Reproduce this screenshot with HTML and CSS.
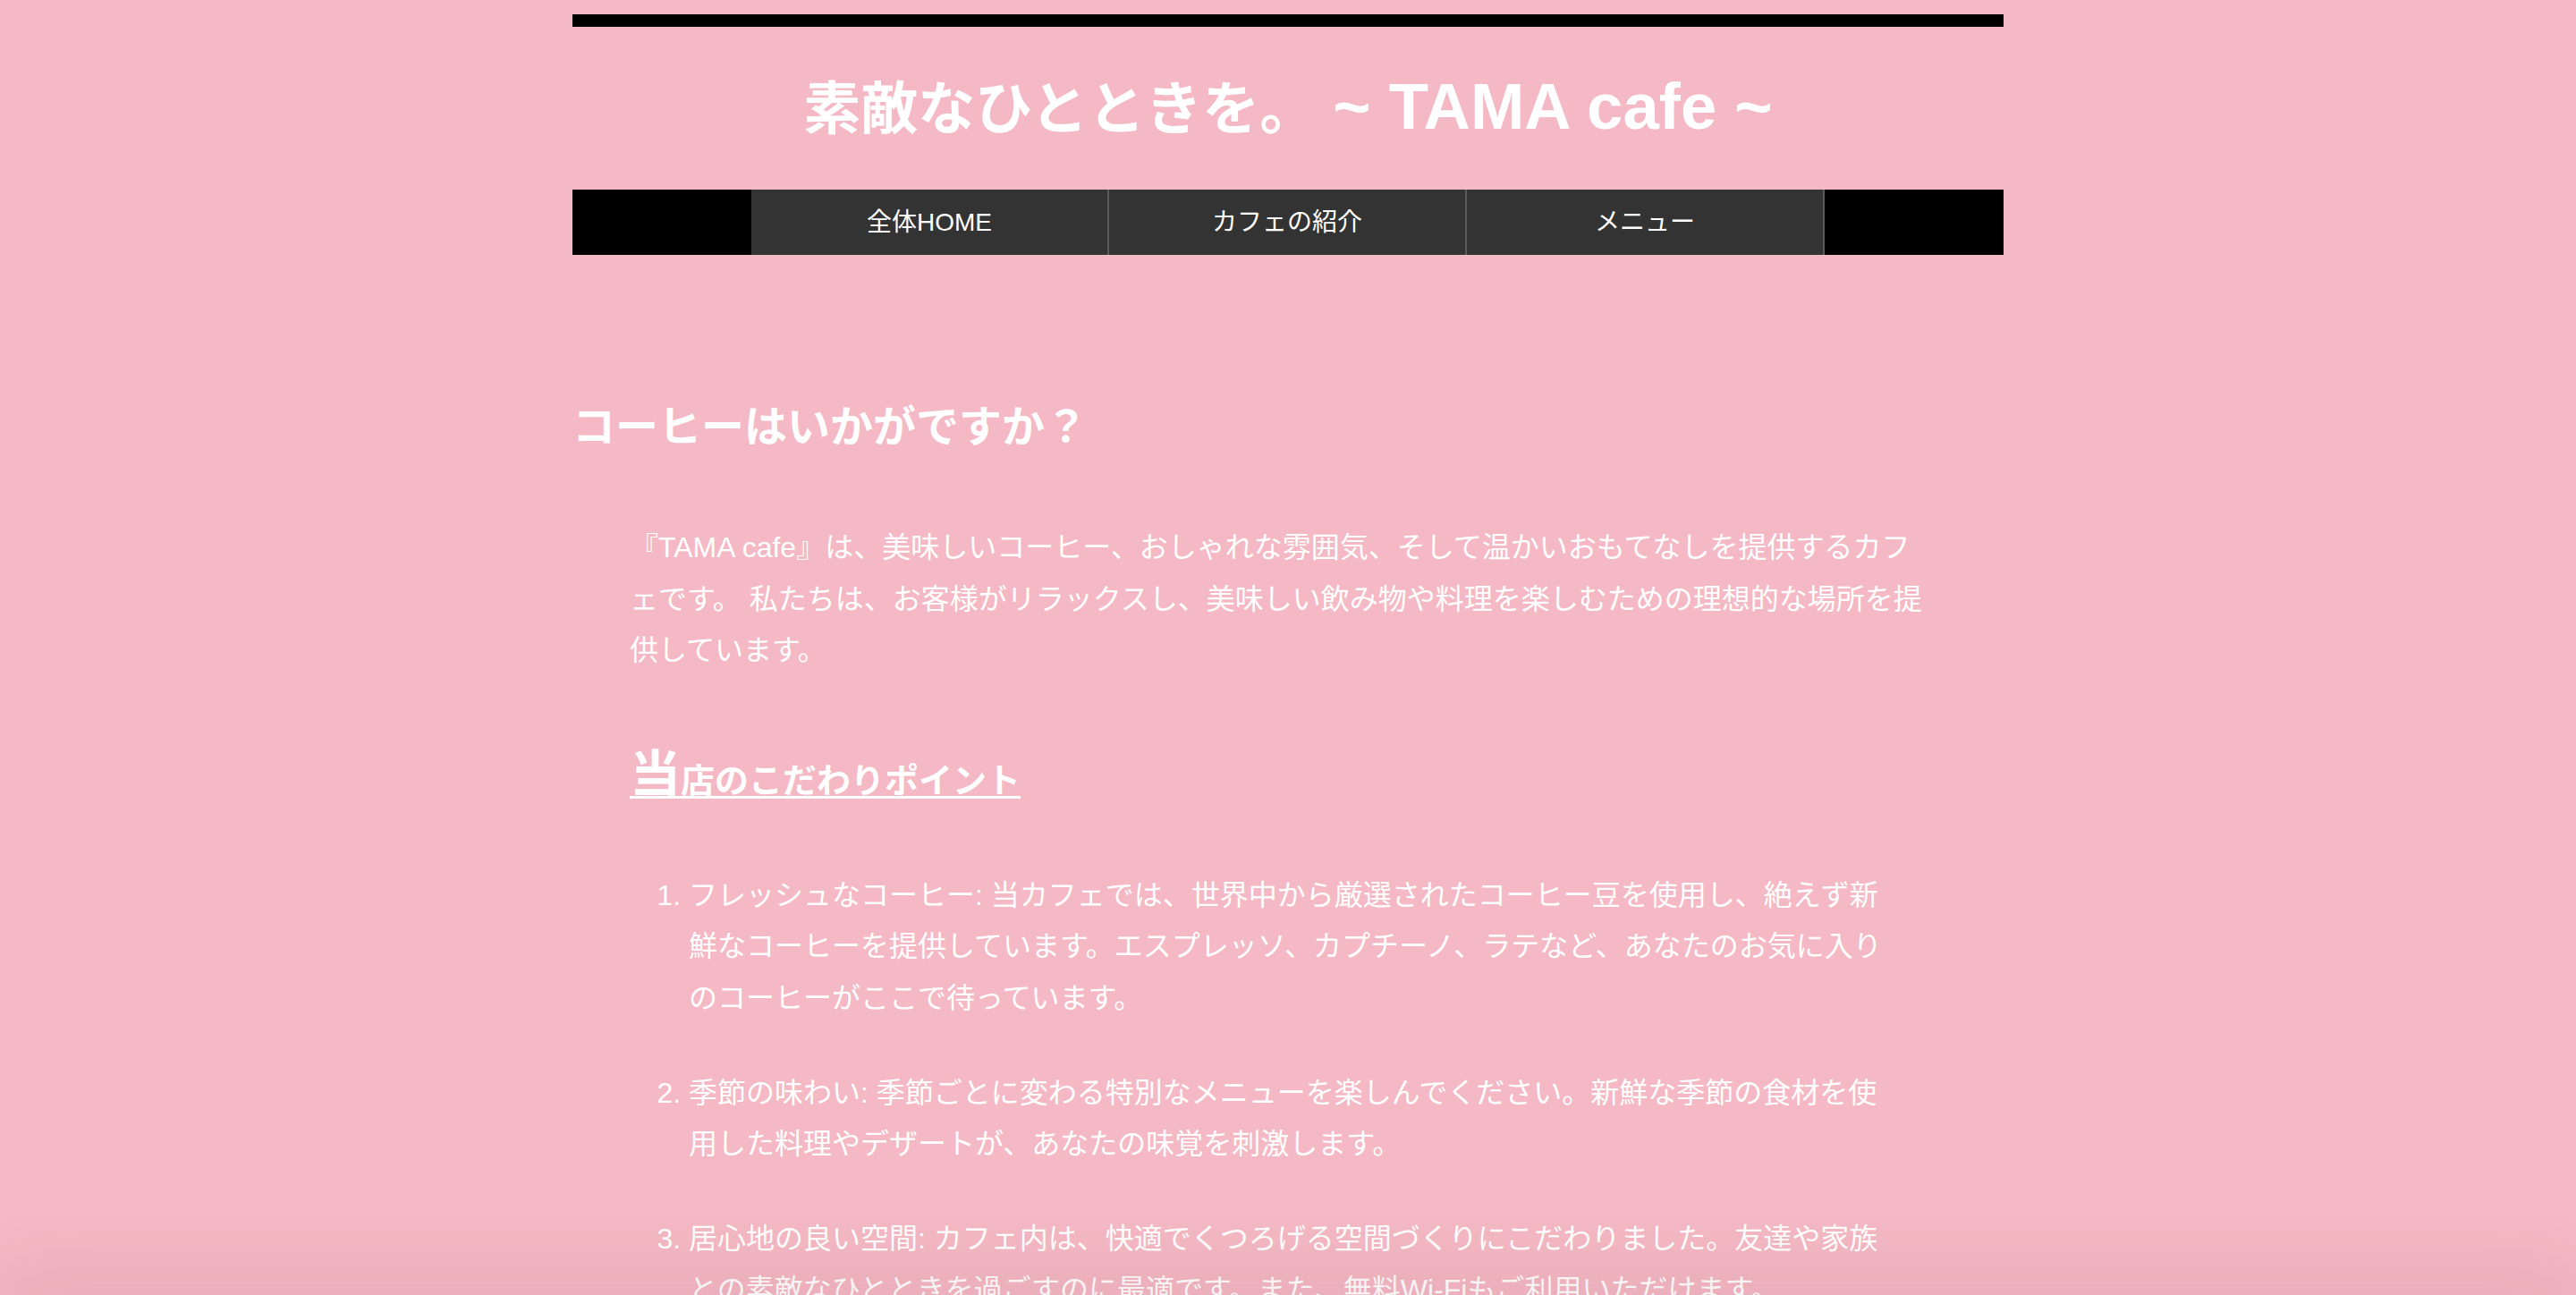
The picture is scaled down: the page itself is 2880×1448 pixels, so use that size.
FILE: index.html
```html
<!DOCTYPE html>
<html lang="ja">
<head>
<meta charset="utf-8">
<title>TAMA cafe</title>
<link rel="stylesheet" href="styles.css">
</head>
<body>
<div class="page">
  <header class="site-header">
    <h1 class="site-title">素敵なひとときを。 <span class="title-latin">~ TAMA cafe ~</span></h1>
    <nav class="global-nav">
      <ul class="nav-list">
        <li class="nav-item"><a class="nav-link" href="#">全体HOME</a></li>
        <li class="nav-item"><a class="nav-link" href="#">カフェの紹介</a></li>
        <li class="nav-item"><a class="nav-link" href="#">メニュー</a></li>
      </ul>
    </nav>
  </header>
  <main class="content">
    <h2 class="section-title">コーヒーはいかがですか？</h2>
    <div class="section-body">
      <p class="intro">『TAMA cafe』は、美味しいコーヒー、おしゃれな雰囲気、そして温かいおもてなしを提供するカフェです。 私たちは、お客様がリラックスし、美味しい飲み物や料理を楽しむための理想的な場所を提供しています。</p>
      <h3 class="sub-title">当店のこだわりポイント</h3>
      <ol class="points">
        <li class="point">フレッシュなコーヒー: 当カフェでは、世界中から厳選されたコーヒー豆を使用し、絶えず新鮮なコーヒーを提供しています。エスプレッソ、カプチーノ、ラテなど、あなたのお気に入りのコーヒーがここで待っています。</li>
        <li class="point">季節の味わい: 季節ごとに変わる特別なメニューを楽しんでください。新鮮な季節の食材を使用した料理やデザートが、あなたの味覚を刺激します。</li>
        <li class="point">居心地の良い空間: カフェ内は、快適でくつろげる空間づくりにこだわりました。友達や家族との素敵なひとときを過ごすのに最適です。また、無料Wi-Fiもご利用いただけます。</li>
      </ol>
    </div>
  </main>
</div>
<div class="bottom-shade"></div>
</body>
</html>
```
FILE: styles.css
```css
html, body {
  margin: 0;
  padding: 0;
}

body {
  background: #f4b9c4;
  color: #ffffff;
  font-family: "Liberation Sans", "Noto Sans CJK JP", sans-serif;
  font-size: 32px;
  overflow: hidden;
  height: 1448px;
}

.page {
  width: 1600px;
  margin: 0 auto;
  padding-top: 16px;
}

.site-header {
  border-top: 14px solid #000;
}

.site-title {
  margin: 46px 0 44px;
  font-size: 64px;
  line-height: 92px;
  height: 92px;
  font-weight: bold;
  text-align: center;
  white-space: nowrap;
}

.title-latin {
  font-size: 72.5px;
  line-height: 1;
}

.global-nav {
  background: #000;
}

.nav-list {
  list-style: none;
  margin: 0;
  padding: 0;
  display: flex;
  justify-content: center;
}

.nav-item {
  width: 398px;
  border-right: 2px solid #5a5a5a;
  background: #333;
}

.nav-link {
  display: block;
  height: 73px;
  line-height: 73px;
  text-align: center;
  color: #fff;
  text-decoration: none;
  font-size: 28px;
}

.content {
  padding-top: 158px;
}

.section-title {
  margin: 0;
  font-size: 48px;
  line-height: 70px;
  font-weight: bold;
}

.section-body {
  padding: 0 64px;
}

.intro {
  margin: 71px 12px 0 0;
  line-height: 57.6px;
}

.sub-title {
  margin: 63px 0 0;
  font-size: 38px;
  font-weight: bold;
  text-decoration: underline;
  text-decoration-thickness: 3px;
  text-underline-offset: 4px;
}

.sub-title::first-letter {
  font-size: 57px;
}

.points {
  margin: 71px 0 0;
  padding: 0 0 0 66px;
  width: 1342px;
}

.point {
  line-height: 57.6px;
  margin-bottom: 48px;
}

.bottom-shade {
  position: fixed;
  left: 0;
  right: 0;
  bottom: -20px;
  height: 20px;
  box-shadow: 0 0 90px 6px rgba(90, 20, 40, 0.2);
  pointer-events: none;
}
```
